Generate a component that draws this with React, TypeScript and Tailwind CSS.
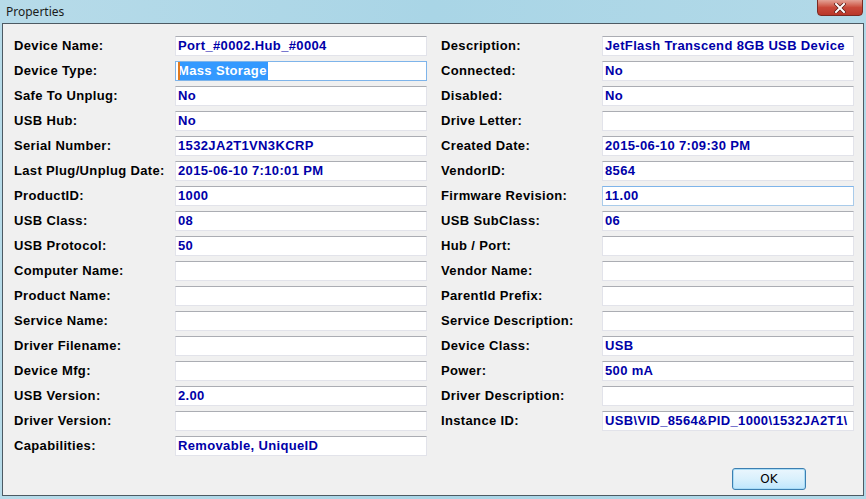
import React from "react";

type Field = { label: string; value?: string; state?: "focus" | "hover" | "selected" };

const left: Field[] = [
  { label: "Device Name:", value: "Port_#0002.Hub_#0004" },
  { label: "Device Type:", value: "Mass Storage", state: "selected" },
  { label: "Safe To Unplug:", value: "No" },
  { label: "USB Hub:", value: "No" },
  { label: "Serial Number:", value: "1532JA2T1VN3KCRP" },
  { label: "Last Plug/Unplug Date:", value: "2015-06-10 7:10:01 PM" },
  { label: "ProductID:", value: "1000" },
  { label: "USB Class:", value: "08" },
  { label: "USB Protocol:", value: "50" },
  { label: "Computer Name:" },
  { label: "Product Name:" },
  { label: "Service Name:" },
  { label: "Driver Filename:" },
  { label: "Device Mfg:" },
  { label: "USB Version:", value: "2.00" },
  { label: "Driver Version:" },
  { label: "Capabilities:", value: "Removable, UniqueID" },
];

const right: Field[] = [
  { label: "Description:", value: "JetFlash Transcend 8GB USB Device" },
  { label: "Connected:", value: "No" },
  { label: "Disabled:", value: "No" },
  { label: "Drive Letter:" },
  { label: "Created Date:", value: "2015-06-10 7:09:30 PM" },
  { label: "VendorID:", value: "8564" },
  { label: "Firmware Revision:", value: "11.00", state: "hover" },
  { label: "USB SubClass:", value: "06" },
  { label: "Hub / Port:" },
  { label: "Vendor Name:" },
  { label: "ParentId Prefix:" },
  { label: "Service Description:" },
  { label: "Device Class:", value: "USB" },
  { label: "Power:", value: "500 mA" },
  { label: "Driver Description:" },
  { label: "Instance ID:", value: "USB\\VID_8564&PID_1000\\1532JA2T1\\" },
];

function Row({ f }: { f: Field }) {
  const box =
    f.state === "selected"
      ? "border-[#7eb4ea]"
      : f.state === "hover"
      ? "border-[#a9cbea] border-t-[#7eb4ea]"
      : "border-[#e2e3ea] border-t-[#abadb3]";
  return (
    <div className="flex h-[20px] items-center">
      <div className="w-[161px] shrink-0 text-black">{f.label}</div>
      <div className={`flex h-[20px] w-[252px] items-center overflow-hidden whitespace-nowrap border bg-white pl-[2px] ${box}`}>
        {f.state === "selected" ? (
          <span className="relative bg-[#3399ff] pr-[1px] text-white">
            <span className="absolute left-0 top-0 h-full w-[2px] bg-[#e07a1f]" />
            {f.value}
          </span>
        ) : (
          <span className="text-[#0000a8]">{f.value}</span>
        )}
      </div>
    </div>
  );
}

export default function App() {
  return (
    <div className="flex h-[499px] w-[866px] flex-col overflow-hidden bg-gradient-to-r from-[#b7dbe9] via-[#a9d5e6] to-[#b2d9e8] px-[2px] pb-[3px]">
      <div className="relative h-[23px] shrink-0">
        <span className="absolute left-[4px] top-[3px] text-[12px] text-[#1b1b1b] [font-family:'Noto_Sans','Liberation_Sans',sans-serif]">
          Properties
        </span>
        <div className="absolute right-[1px] top-[-1px] flex h-[17px] w-[46px] items-center justify-center rounded-b-[4px] border border-[#7a2a22] bg-gradient-to-b from-[#e3a296] via-[#c9493a] to-[#b9372a]">
          <svg width="12" height="10" viewBox="0 0 12 10">
            <path d="M2 1 L10 9 M10 1 L2 9" stroke="#5a1a14" strokeWidth="3.4" strokeLinecap="square" />
            <path d="M2 1 L10 9 M10 1 L2 9" stroke="#ffffff" strokeWidth="2" strokeLinecap="square" />
          </svg>
        </div>
      </div>
      <div className="flex flex-1 flex-col border border-[#4d5a63] bg-[#f0f0f0] pl-[11px] pt-[12px] text-[13px] font-bold tracking-[0.35px] [font-family:'Liberation_Sans',Arial,sans-serif]">
        <div className="flex gap-[14px]">
          <div className="flex flex-col gap-[5px]">
            {left.map((f) => (
              <Row key={f.label} f={f} />
            ))}
          </div>
          <div className="flex flex-col gap-[5px]">
            {right.map((f) => (
              <Row key={f.label} f={f} />
            ))}
          </div>
        </div>
        <div className="mr-[57px] mt-[12px] flex justify-end">
          <button className="flex h-[22px] w-[74px] items-center justify-center rounded-[3px] border border-[#3c7fb1] bg-gradient-to-b from-[#eaf6fd] via-[#d9f0fc] to-[#bee6fd] text-[12px] font-normal tracking-normal text-black shadow-[inset_0_0_0_1px_#a9dcf6] [font-family:'DejaVu_Sans',sans-serif]">
            OK
          </button>
        </div>
      </div>
    </div>
  );
}
